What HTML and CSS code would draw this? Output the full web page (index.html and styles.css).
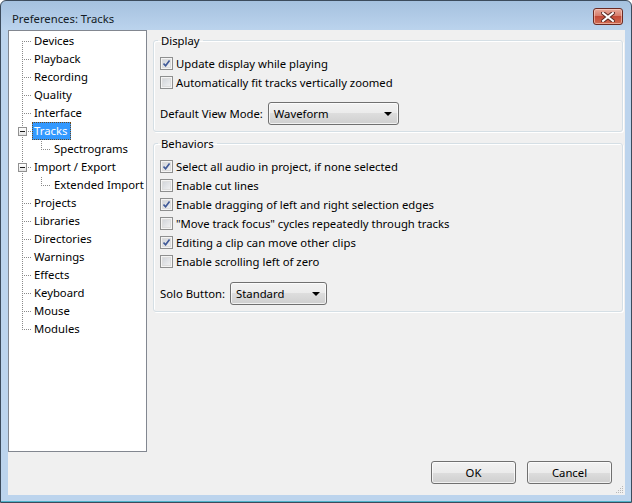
FILE: index.html
```html
<!DOCTYPE html>
<html>
<head>
<meta charset="utf-8">
<title>Preferences: Tracks</title>
<link rel="stylesheet" href="styles.css">
</head>
<body>
<div class="window">
  <div class="titlebar">
    <span class="title">Preferences: Tracks</span>
    <span class="close-btn">
      <svg width="14" height="10" viewBox="0 0 14 10">
        <path d="M2 1 L12 9 M12 1 L2 9" stroke="#5a2a24" stroke-width="4" stroke-linecap="square"/>
        <path d="M2 1 L12 9 M12 1 L2 9" stroke="#ffffff" stroke-width="2" stroke-linecap="square"/>
      </svg>
    </span>
  </div>
  <div class="client">
    <div class="main">
      <div class="tree">
        <ul class="tree-root">
          <li class="node">Devices</li>
          <li class="node">Playback</li>
          <li class="node">Recording</li>
          <li class="node">Quality</li>
          <li class="node">Interface</li>
          <li class="node"><span class="expander"></span><span class="label selected">Tracks</span></li>
          <li class="child">Spectrograms</li>
          <li class="node"><span class="expander"></span><span class="label">Import / Export</span></li>
          <li class="child">Extended Import</li>
          <li class="node">Projects</li>
          <li class="node">Libraries</li>
          <li class="node">Directories</li>
          <li class="node">Warnings</li>
          <li class="node">Effects</li>
          <li class="node">Keyboard</li>
          <li class="node">Mouse</li>
          <li class="node">Modules</li>
        </ul>
      </div>
      <div class="panel">
        <fieldset class="group">
          <legend>Display</legend>
          <div class="check-row"><span class="checkbox checked"></span><span>Update display while playing</span></div>
          <div class="check-row"><span class="checkbox"></span><span>Automatically fit tracks vertically zoomed</span></div>
          <div class="choice-row">
            <span>Default View Mode:</span>
            <span class="combo combo-view"><span>Waveform</span><span class="arrow"></span></span>
          </div>
        </fieldset>
        <fieldset class="group">
          <legend>Behaviors</legend>
          <div class="check-row"><span class="checkbox checked"></span><span>Select all audio in project, if none selected</span></div>
          <div class="check-row"><span class="checkbox"></span><span>Enable cut lines</span></div>
          <div class="check-row"><span class="checkbox checked"></span><span>Enable dragging of left and right selection edges</span></div>
          <div class="check-row"><span class="checkbox"></span><span>"Move track focus" cycles repeatedly through tracks</span></div>
          <div class="check-row"><span class="checkbox checked"></span><span>Editing a clip can move other clips</span></div>
          <div class="check-row"><span class="checkbox"></span><span>Enable scrolling left of zero</span></div>
          <div class="choice-row choice-solo">
            <span>Solo Button:</span>
            <span class="combo combo-solo"><span>Standard</span><span class="arrow"></span></span>
          </div>
        </fieldset>
      </div>
    </div>
    <div class="footer">
      <span class="button">OK</span>
      <span class="button">Cancel</span>
      <svg class="grip" width="8" height="8" viewBox="0 0 8 8">
        <g fill="#b8b8b8">
          <rect x="6" y="0" width="1" height="1"/>
          <rect x="4" y="2" width="1" height="1"/><rect x="6" y="2" width="1" height="1"/>
          <rect x="2" y="4" width="1" height="1"/><rect x="4" y="4" width="1" height="1"/><rect x="6" y="4" width="1" height="1"/>
          <rect x="0" y="6" width="1" height="1"/><rect x="2" y="6" width="1" height="1"/><rect x="4" y="6" width="1" height="1"/><rect x="6" y="6" width="1" height="1"/>
        </g>
      </svg>
    </div>
  </div>
</div>
</body>
</html>
```
FILE: styles.css
```css
* { box-sizing: border-box; }
html, body { margin: 0; padding: 0; background: #ffffff; }
body {
  font-family: "Noto Sans", "DejaVu Sans", sans-serif;
  font-size: 11.3px;
  color: #000;
}
.window {
  width: 632px;
  height: 503px;
  border: 1px solid #3c4b5c;
  border-radius: 6px 6px 0 0;
  background: linear-gradient(to bottom, #a5c1df 0px, #b6cfea 22px, #bcd4ed 30px, #bcd4ed 100%);
  padding: 0 6px 7px 7px;
  display: flex;
  flex-direction: column;
  box-shadow: inset 0 -1px 0 #4fb3c9;
}
.titlebar {
  height: 29px;
  padding: 5px 2px 0 4px;
  display: flex;
  align-items: center;
  justify-content: space-between;
}
.title {
  font-size: 11.3px;
  color: #141c26;
}
.close-btn {
  width: 30px;
  height: 17px;
  border: 1px solid #6b2a22;
  border-radius: 3px;
  background: linear-gradient(to bottom, #e9a99b 0%, #d77d6c 45%, #c44a37 50%, #cf6b52 100%);
  box-shadow: inset 0 0 0 1px rgba(255,220,210,0.55);
  display: flex;
  align-items: center;
  justify-content: center;
  margin-top: -3px;
}
.client {
  flex: 1;
  background: #f0f0f0;
  display: flex;
  flex-direction: column;
}
.main {
  display: flex;
  gap: 6px;
  padding-right: 2px;
}
.tree {
  width: 139px;
  height: 422px;
  border: 1px solid #828790;
  background: #fff;
  padding-top: 1px;
}
.tree-root {
  list-style: none;
  margin: 0;
  padding: 0;
  background-image: repeating-linear-gradient(to bottom, #8a8a8a 0 1px, transparent 1px 2px);
  background-repeat: no-repeat;
  background-position: 13px 9px;
  background-size: 1px calc(100% - 17px);
}
.tree-root li {
  height: 18px;
  line-height: 18px;
  white-space: nowrap;
}
.node {
  padding-left: 25px;
  background-image: repeating-linear-gradient(to right, #8a8a8a 0 1px, transparent 1px 2px);
  background-repeat: no-repeat;
  background-position: 15px 9px;
  background-size: 7px 1px;
  display: flex;
  align-items: center;
}
.child {
  padding-left: 45px;
  background-image:
    repeating-linear-gradient(to right, #8a8a8a 0 1px, transparent 1px 2px),
    repeating-linear-gradient(to bottom, #8a8a8a 0 1px, transparent 1px 2px);
  background-repeat: no-repeat, no-repeat;
  background-position: 34px 9px, 32px 1px;
  background-size: 7px 1px, 1px 9px;
}
.expander {
  width: 9px;
  height: 9px;
  margin-left: -16px;
  margin-right: 7px;
  border: 1px solid #919191;
  background: linear-gradient(to bottom, #ffffff, #e6e6e6);
  flex: none;
  display: flex;
  align-items: center;
  justify-content: center;
}
.expander::after {
  content: "";
  width: 5px;
  height: 1px;
  background: #1c1c1c;
}
.label.selected {
  background: #3399ff;
  color: #fff;
  margin-left: -2px;
  padding: 0 4px 0 2px;
  height: 18px;
  outline: 1px dotted #6b4a20;
  outline-offset: -1px;
}
.panel {
  flex: 1;
  padding-top: 3px;
  display: flex;
  flex-direction: column;
  gap: 4px;
}
.group {
  margin: 0;
  border: 1px solid #d5dfe5;
  border-radius: 3px;
  box-shadow: inset 1px 1px 0 #ffffff, 1px 1px 0 #ffffff;
  padding: 6px;
  min-width: 0;
}
.group legend {
  padding: 0 3px;
  margin-left: -2px;
  line-height: 15px;
}
.check-row {
  height: 19px;
  display: flex;
  align-items: center;
  gap: 3px;
  white-space: nowrap;
}
.checkbox {
  width: 13px;
  height: 13px;
  flex: none;
  border: 1px solid #8e8f8f;
  background: #fff;
  box-shadow: inset 0 0 0 1px #f4f4f4, inset 0 0 0 2px #ddd;
  background-image: linear-gradient(135deg, #cbcfd5 0%, #f6f6f6 100%);
  background-clip: content-box;
  padding: 2px;
}
.checkbox.checked {
  background-image: url("data:image/svg+xml;utf8,<svg xmlns='http://www.w3.org/2000/svg' width='7' height='7' viewBox='0 0 7 7'><path d='M0.5 3.5 L2.6 5.8 L6.5 0.5' fill='none' stroke='%23405a98' stroke-width='1.6'/></svg>"), linear-gradient(135deg, #cbcfd5 0%, #f6f6f6 100%);
  background-repeat: no-repeat;
  background-position: center;
}
.choice-row {
  display: flex;
  align-items: center;
  gap: 5px;
  margin-top: 10px;
  white-space: nowrap;
}
.choice-solo { margin-top: 11px; }
.combo {
  height: 23px;
  border: 1px solid #707070;
  border-radius: 3px;
  background: linear-gradient(to bottom, #f2f2f2 0%, #ebebeb 50%, #dddddd 50%, #cfcfcf 100%);
  box-shadow: inset 0 0 0 1px rgba(255,255,255,0.7);
  display: flex;
  align-items: center;
  justify-content: space-between;
  padding: 0 6px 0 5px;
}
.combo-view { width: 131px; }
.combo-solo { width: 97px; }
.arrow {
  width: 0;
  height: 0;
  border-left: 4px solid transparent;
  border-right: 4px solid transparent;
  border-top: 4px solid #000;
}
.footer {
  flex: 1;
  display: flex;
  align-items: flex-end;
  justify-content: flex-end;
  gap: 11px;
  padding: 0 13px 11px 0;
  position: relative;
}
.button {
  width: 85px;
  height: 23px;
  border: 1px solid #707070;
  border-radius: 3px;
  background: linear-gradient(to bottom, #f2f2f2 0%, #ebebeb 50%, #dddddd 50%, #cfcfcf 100%);
  box-shadow: inset 0 0 0 1px rgba(255,255,255,0.7);
  display: flex;
  align-items: center;
  justify-content: center;
}
.grip {
  position: absolute;
  right: 1px;
  bottom: 1px;
}
```
